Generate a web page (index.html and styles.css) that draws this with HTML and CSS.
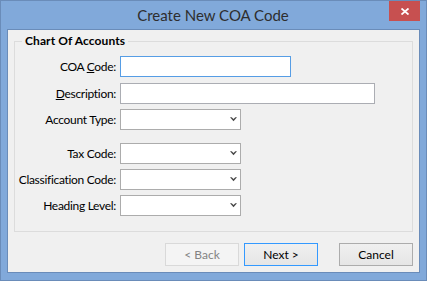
FILE: index.html
```html
<!DOCTYPE html>
<html>
<head>
<meta charset="utf-8">
<link rel="stylesheet" href="styles.css">
</head>
<body>
<div class="window">
  <div class="titlebar">
    <div class="spacer"></div>
    <div class="title">Create New COA Code</div>
    <div class="close"><svg width="8" height="7" viewBox="0 0 8 7"><path d="M0.5 0.5 L7.5 6.5 M7.5 0.5 L0.5 6.5" stroke="#fff" stroke-width="1.8" fill="none"/></svg></div>
  </div>
  <div class="client">
    <fieldset class="group">
      <legend class="legend">Chart Of Accounts</legend>
      <div class="form">
        <div class="row first"><label class="lbl">COA <u>C</u>ode:</label><div class="input focused w171"></div></div>
        <div class="row"><label class="lbl"><u>D</u>escription:</label><div class="input w255"></div></div>
        <div class="row spaced"><label class="lbl">Account Type:</label><div class="select"><svg width="7" height="5" viewBox="0 0 7 5"><path d="M0 0.3 L1.7 0.3 L3.5 2.1 L5.3 0.3 L7 0.3 L3.5 4.2 Z" fill="#474747"/></svg></div></div>
        <div class="row"><label class="lbl">Tax Code:</label><div class="select"><svg width="7" height="5" viewBox="0 0 7 5"><path d="M0 0.3 L1.7 0.3 L3.5 2.1 L5.3 0.3 L7 0.3 L3.5 4.2 Z" fill="#474747"/></svg></div></div>
        <div class="row"><label class="lbl">Classification Code:</label><div class="select"><svg width="7" height="5" viewBox="0 0 7 5"><path d="M0 0.3 L1.7 0.3 L3.5 2.1 L5.3 0.3 L7 0.3 L3.5 4.2 Z" fill="#474747"/></svg></div></div>
        <div class="row"><label class="lbl">Heading Level:</label><div class="select"><svg width="7" height="5" viewBox="0 0 7 5"><path d="M0 0.3 L1.7 0.3 L3.5 2.1 L5.3 0.3 L7 0.3 L3.5 4.2 Z" fill="#474747"/></svg></div></div>
      </div>
    </fieldset>
    <div class="buttons">
      <div class="btn disabled">&lt; Back</div>
      <div class="btn default">Next &gt;</div>
      <div class="btn cancel">Cancel</div>
    </div>
  </div>
</div>
</body>
</html>
```
FILE: styles.css
```css
html, body {
  margin: 0;
  padding: 0;
}
body {
  width: 427px;
  height: 281px;
  overflow: hidden;
  font-family: Lato, "Liberation Sans", sans-serif;
  font-size: 12px;
  color: #000;
}
.window {
  box-sizing: border-box;
  width: 427px;
  height: 281px;
  border: 1px solid #6a8cb9;
  background: #81a9da;
  padding: 0 6px 7px 6px;
  display: flex;
  flex-direction: column;
}
.titlebar {
  height: 28px;
  display: grid;
  grid-template-columns: 1fr auto 1fr;
  align-items: start;
}
.title {
  font-size: 15px;
  line-height: 28px;
  color: #2e2e2e;
  text-align: center;
  padding-right: 1px;
}
.close {
  justify-self: end;
  width: 31px;
  height: 20px;
  background: #c75050;
  display: flex;
  align-items: center;
  justify-content: center;
}
.client {
  flex: 1;
  border: 1px solid #6a8cb9;
  background: #f0f0f0;
  padding: 4px 6px 6px 6px;
  display: flex;
  flex-direction: column;
}
.group {
  margin: 0;
  padding: 8px 0 15px 0;
  border: 1px solid #dcdcdc;
  min-width: 0;
}
.legend {
  margin-left: 7px;
  padding: 0 3px;
  font-weight: bold;
  font-size: 12px;
  line-height: 14px;
  letter-spacing: 0.1px;
}
.form {
  display: flex;
  flex-direction: column;
  gap: 5px;
}
.row {
  display: grid;
  grid-template-columns: 102px auto;
  column-gap: 3px;
  align-items: center;
  height: 21px;
}
.row.first {
  margin-bottom: 1px;
}
.row.spaced {
  margin-bottom: 8px;
}
.lbl {
  text-align: right;
  white-space: nowrap;
  letter-spacing: -0.3px;
  padding-right: 1px;
}
.lbl u {
  text-underline-offset: 1px;
}
.input {
  box-sizing: border-box;
  height: 21px;
  background: #fff;
  border: 1px solid #abadb3;
}
.input.focused {
  border-color: #569de5;
}
.w171 { width: 171px; }
.w255 { width: 255px; }
.select {
  box-sizing: border-box;
  width: 121px;
  height: 21px;
  background: #fff;
  border: 1px solid #acacac;
  display: flex;
  align-items: center;
  justify-content: flex-end;
  padding-right: 3px;
}
.buttons {
  margin-top: 11px;
  display: flex;
  justify-content: flex-end;
  gap: 5px;
}
.btn {
  box-sizing: border-box;
  width: 74px;
  height: 23px;
  border: 1px solid #acacac;
  background: linear-gradient(#f0f0f0, #e5e5e5);
  display: flex;
  align-items: center;
  justify-content: center;
  color: #000;
}
.btn.disabled {
  border-color: #d9d9d9;
  background: #f4f4f4;
  color: #838383;
}
.btn.default {
  border-color: #3399ff;
}
.btn.cancel {
  margin-left: 16px;
}
```
